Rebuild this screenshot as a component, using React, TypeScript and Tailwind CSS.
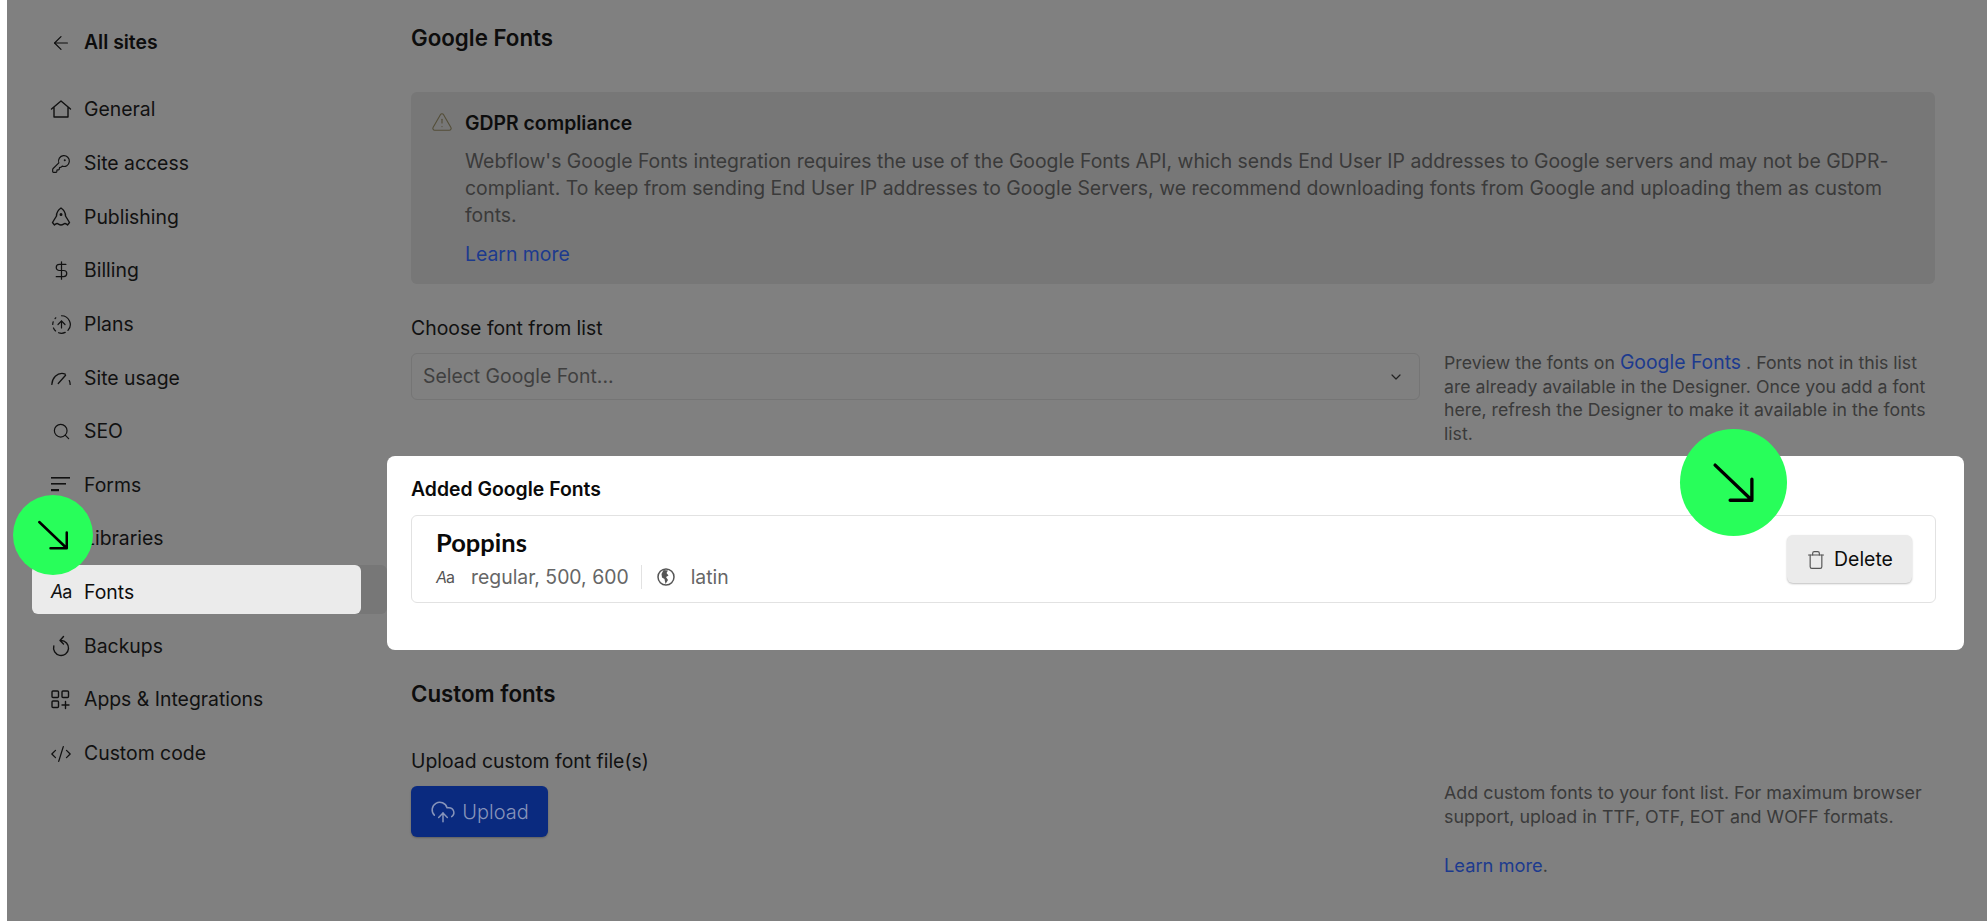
import { ArrowLeft, KeyRound, DollarSign, CircleFadingArrowUp, Search, CodeXml, Trash, CloudUpload, TriangleAlert, ChevronDown } from "lucide-react";
import type { ReactNode } from "react";

const stroke = { fill: "none", stroke: "currentColor", strokeWidth: 1.4, strokeLinecap: "round" as const, strokeLinejoin: "round" as const };

const Home = () => (
  <svg width="22" height="22" viewBox="0 0 22 22" {...stroke}><path d="M1.5 10 11 2l9.5 8M4 8v10h14V8" /></svg>
);
const Rocket = () => (
  <svg width="22" height="22" viewBox="0 0 22 22" {...stroke}>
    <path d="M11 2c3 2 4.5 5 4.5 8l4 6.500-2 2.500c-1-.8-1.800-1.500-2.700-1.500-1 0-1.800 1.500-3.800 1.500s-2.800-1.500-3.800-1.500c-.9 0-1.700.7-2.700 1.500l-2-2.500 4-6.500c0-3 1.500-6 4.500-8z" />
    <circle cx="11" cy="8.500" r=".8" fill="currentColor" />
  </svg>
);
const Usage = () => (
  <svg width="24" height="18" viewBox="0 0 24 18" {...stroke}><path d="M2 16C2.500 8 8 4 13 4c1.500 0 2.500.3 3.500.7M22 16c0-1.500-.4-3-1-4.200M9 15 17 6" /></svg>
);
const Lines = () => (
  <svg width="20" height="16" viewBox="0 0 20 16" fill="currentColor"><rect x="0" y="0" width="19" height="1.600" /><rect x="0" y="6" width="15" height="1.600" /><rect x="0" y="12" width="8" height="2.200" /></svg>
);
const Backup = () => (
  <svg width="20" height="22" viewBox="0 0 20 22" {...stroke}><path d="M10 5.500A7.500 7.500 0 1 1 2.800 11M12.500 1.500 9 5.500l3.500 3.500" /></svg>
);
const Apps = () => (
  <svg width="20" height="20" viewBox="0 0 20 20" {...stroke}>
    <rect x="1" y="1" width="6.500" height="6.500" rx="1" /><rect x="11" y="1" width="6.500" height="6.500" rx="1" /><rect x="1" y="11" width="6.500" height="6.500" rx="1" />
    <path d="M14.500 11.500v7M11 15h7" />
  </svg>
);
const Aa = ({ cls }: { cls: string }) => (
  <span className={"leading-none tracking-[-1px] " + cls}><span className="italic">A</span>a</span>
);
const Globe = () => (
  <svg width="20" height="20" viewBox="0 0 20 20">
    <circle cx="10" cy="10" r="8" fill="none" stroke="currentColor" strokeWidth="1.500" />
    <path d="M7.500 3 12 3.500 10.500 6 12.500 8.500 10 10 12 13 9.500 17 8.500 12 6 10.500 5.500 7z" fill="currentColor" />
  </svg>
);

const rows: { label: string; icon: ReactNode; active?: boolean }[] = [
  { label: "General", icon: <Home /> },
  { label: "Site access", icon: <KeyRound size={20} strokeWidth={1.4} /> },
  { label: "Publishing", icon: <Rocket /> },
  { label: "Billing", icon: <DollarSign size={21} strokeWidth={1.4} /> },
  { label: "Plans", icon: <CircleFadingArrowUp size={21} strokeWidth={1.4} /> },
  { label: "Site usage", icon: <Usage /> },
  { label: "SEO", icon: <Search size={19} strokeWidth={1.500} /> },
  { label: "Forms", icon: <Lines /> },
  { label: "Libraries", icon: <span /> },
  { label: "Fonts", icon: <Aa cls="text-[18px] text-[#111]" />, active: true },
  { label: "Backups", icon: <Backup /> },
  { label: "Apps & Integrations", icon: <Apps /> },
  { label: "Custom code", icon: <CodeXml size={22} strokeWidth={1.4} /> },
];

function Row({ label, icon, active }: { label: string; icon: ReactNode; active?: boolean }) {
  const inner = (
    <>
      <span className="w-[22px] ml-[18px] shrink-0 flex items-center justify-center">{icon}</span>
      <span className="ml-[12px]">{label}</span>
    </>
  );
  if (active) {
    return (
      <div className="h-[48.5px] -mt-[3.5px] mb-[3px] w-[355px] rounded-md bg-[#777777] text-[19.4px] text-[#0d0d0d]">
        <div className="h-full w-[329px] rounded-md bg-[#ebebeb] pt-[6px] flex items-center">{inner}</div>
      </div>
    );
  }
  return <div className="h-[48px] w-[355px] flex items-center text-[19.4px] text-[#111111]">{inner}</div>;
}

function Arrow() {
  return (
    <svg viewBox="0 0 320 320" className="w-full h-full" fill="none" stroke="#000" strokeWidth="10" strokeLinecap="round" strokeLinejoin="round">
      <path d="M105 108 215 213M150 213H215V150" />
    </svg>
  );
}

export default function App() {
  return (
    <div className="relative h-[921px] w-full overflow-hidden flex bg-white font-['Inter',sans-serif]">
      <div className="w-[7px] shrink-0 bg-white" />
      <div className="flex-1 flex bg-[#808080] pl-[25px]">
        <aside className="w-[355px] shrink-0 pt-[19px]">
          <div className="h-[48px] flex items-center text-[19.4px] font-semibold text-[#0d0d0d]">
            <span className="w-[22px] ml-[18px] shrink-0 flex items-center justify-center"><ArrowLeft size={24} strokeWidth={1.300} /></span>
            <span className="ml-[12px]">All sites</span>
          </div>
          <nav className="mt-[19px] flex flex-col gap-[5.64px]">
            {rows.map((r) => <Row key={r.label} {...r} />)}
          </nav>
        </aside>

        <main className="w-[1577px] shrink-0 flex flex-col">
          <div className="px-[24px]">
            <h2 className="mt-[23px] h-[30px] leading-[30px] text-[22.3px] font-semibold text-[#0d0d0d]">Google Fonts</h2>
            <div className="mt-[39px] w-[1524px] h-[192px] rounded-md bg-[#777777] pt-[18px] pl-[20px] flex gap-[12px]">
              <TriangleAlert size={22} strokeWidth={1.200} className="text-[#544e38] shrink-0 mt-[1px]" />
              <div>
                <div className="h-[27px] leading-[27px] text-[19.4px] font-semibold text-[#0d0d0d]">GDPR compliance</div>
                <p className="mt-[11px] w-[1450px] text-[19.4px] leading-[27px] text-[#3a3a3a]">
                  Webflow's Google Fonts integration requires the use of the Google Fonts API, which sends End User IP addresses to Google servers and may not be GDPR-compliant. To keep from sending End User IP addresses to Google Servers, we recommend downloading fonts from Google and uploading them as custom fonts.
                </p>
                <div className="mt-[12px] text-[19.4px] leading-[27px] text-[#1c3a8e]">Learn more</div>
              </div>
            </div>

            <div className="mt-[31px] h-[25px] leading-[27px] text-[19.4px] text-[#111111]">Choose font from list</div>
            <div className="mt-[13px] h-[47px] flex gap-[24px]">
              <div className="w-[1009px] h-[47px] rounded-md border border-[#757575] pl-[11px] pr-[11px] pt-[1px] flex items-center justify-between text-[19.4px] text-[#3f3f3f]">
                <span>Select Google Font...</span>
                <ChevronDown size={16} strokeWidth={1.800} className="mr-[4px] text-[#222]" />
              </div>
              <p className="w-[492px] text-[17.7px] leading-[23.7px] text-[#3a3a3a] -mt-[2px]">
                Preview the fonts on <span className="text-[19.4px] text-[#1c3a8e]">Google Fonts</span> . Fonts not in this list are already available in the Designer. Once you add a font here, refresh the Designer to make it available in the fonts list.
              </p>
            </div>
          </div>

          <section className="mt-[56px] h-[194px] w-[1577px] rounded-lg bg-white px-[24px] pt-[20px] relative">
            <h3 className="h-[26px] leading-[26px] text-[19.4px] font-semibold text-[#0a0a0a]">Added Google Fonts</h3>
            <div className="mt-[13px] w-[1525px] h-[88px] rounded-md border border-[#e2e2e2] pl-[24px] pr-[23px] flex items-center justify-between">
              <div className="pb-[2px]">
                <div className="text-[25.5px] leading-[30px] font-bold font-['Lato',sans-serif] text-[#0a0a0a]">Poppins</div>
                <div className="mt-[7px] flex items-center text-[19.4px] leading-[26px] text-[#666666]">
                  <Aa cls="text-[16px] w-[20px] text-[#555]" />
                  <span className="ml-[15px]">regular, 500, 600</span>
                  <span className="ml-[12px] h-[24px] w-px bg-[#e2e2e2]" />
                  <span className="ml-[14px] text-[#555]"><Globe /></span>
                  <span className="ml-[15px]">latin</span>
                </div>
              </div>
              <div className="w-[125px] h-[48px] pt-[1px] rounded-md bg-[#ebebeb] shadow-[0_1px_2px_rgba(0,0,0,0.25)] flex items-center justify-center gap-[8px] text-[19.4px] text-[#0d0d0d]">
                <Trash size={20} strokeWidth={1.400} className="text-[#555]" />
                Delete
              </div>
            </div>
          </section>

          <div className="px-[24px]">
            <h2 className="mt-[29px] h-[30px] leading-[30px] text-[22.3px] font-semibold text-[#0d0d0d]">Custom fonts</h2>
            <div className="mt-[39px] flex gap-[24px]">
              <div className="w-[1009px]">
                <div className="h-[26px] leading-[26px] text-[19.4px] text-[#111111]">Upload custom font file(s)</div>
                <div className="mt-[12px] w-[137px] h-[51px] rounded-md bg-[#0a2a7f] shadow-[0_1px_2px_rgba(0,0,0,0.25)] flex items-center justify-center gap-[6px] text-[20px] font-light text-[#8794ba]">
                  <CloudUpload size={26} strokeWidth={1.400} />
                  Upload
                </div>
              </div>
              <div className="w-[492px] text-[17.85px] leading-[23.7px] text-[#3a3a3a] mt-[33px]">
                <p>Add custom fonts to your font list. For maximum browser support, upload in TTF, OTF, EOT and WOFF formats.</p>
                <p className="mt-[26px]"><span className="text-[18.3px] text-[#1c3a8e]">Learn more</span>.</p>
              </div>
            </div>
          </div>
        </main>
      </div>

      <div className="absolute left-[13px] top-[495px] w-[80px] h-[80px] rounded-full bg-[#28fe5a]"><Arrow /></div>
      <div className="absolute left-[1680px] top-[429px] w-[107px] h-[107px] rounded-full bg-[#28fe5a]"><Arrow /></div>
    </div>
  );
}
